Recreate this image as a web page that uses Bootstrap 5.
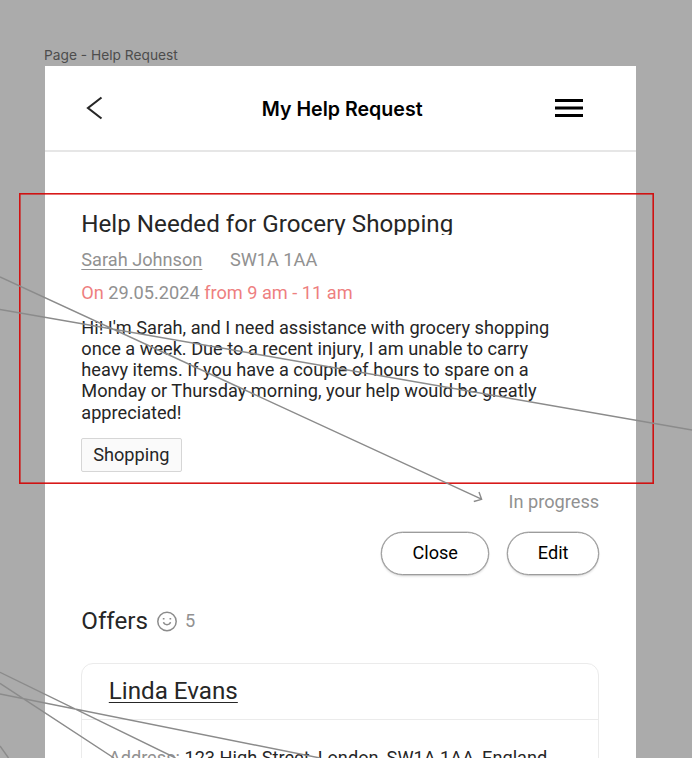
<!DOCTYPE html>
<html lang="en">
<head>
<meta charset="utf-8">
<meta name="viewport" content="width=device-width, initial-scale=1">
<title>My Help Request</title>
<link href="https://cdn.jsdelivr.net/npm/bootstrap@5.3.0/dist/css/bootstrap.min.css" rel="stylesheet">
<style>
body{background:#ababab;height:758px;font-family:Roboto,sans-serif;font-size:18.18px;line-height:22px;color:#262626}
.artboard{width:591px;height:692px;margin-left:44.7px}
.frame-label{font:13.75px/20px Inter,sans-serif;color:#4d4d4d;padding-top:45px;height:66px;margin-left:44px}
.topbar{height:86px;border-bottom:2px solid #e6e6e6;padding:0 53px 0 41px}
.topbar h1{font:600 19.6px/24px Inter,sans-serif;color:#000;padding-top:1px}
.content{padding:58px 36.5px 0 36.6px}
.heading{font-size:24.2px;line-height:28px}
.request-title{clip-path:inset(0 0 3px 0)}
.soft{color:#919191}
.coral{color:#ee7f7f}
.who{margin-top:11px;gap:27.5px}
.when{margin-top:11px}
.story{margin-top:13px;line-height:21.12px;height:106px}
.tag{margin-top:15px;width:101px;height:33.5px;padding-right:1px;border:1px solid #d6d6d6;background:#fafafa;border-radius:2px}
.status{margin-top:19.5px}
.actions{margin-top:19px;gap:18px}
.pill{height:42.5px;border:1px solid #9c9c9c;font-size:18.1px;line-height:22px;color:#000;background:#fff;box-shadow:0 0 0 .4px #b5b5b5,0 2px 2px rgba(0,0,0,.09)}
.pill-close{width:108px}
.pill-edit{width:92px}
.offers{margin-top:32px;gap:8px}
.offers svg{margin-right:-1px}
.offer-card{margin-top:28px;border:1px solid #ebebeb;border-radius:12px;height:160px}
.offer-card .card-header{height:56px;border-bottom:1px solid #ebebeb;padding:0 26.5px}
.offer-card .card-body{padding:27px 26.5px}
.under{text-decoration:underline;text-decoration-thickness:1.3px;text-underline-offset:2.5px}
</style>
</head>
<body class="position-relative overflow-hidden">
<div class="frame-label">Page - Help Request</div>
<main class="artboard bg-white overflow-hidden">
  <header class="topbar d-flex align-items-center justify-content-between">
    <svg width="44" height="26" viewBox="0 0 44 26" fill="none" stroke="#262626" stroke-width="2.1"><path d="M15.500 2.500 2 13l13.500 10.500"/></svg>
    <h1 class="mb-0">My Help Request</h1>
    <svg width="28" height="20" viewBox="0 0 28 20" fill="#000"><path d="M0 1h28v3H0zM0 8.500h28v3H0zM0 16h28v3H0z"/></svg>
  </header>
  <div class="content">
    <h2 class="heading request-title m-0 fw-normal">Help Needed for Grocery Shopping</h2>
    <div class="who soft d-flex"><span class="under">Sarah Johnson</span><span>SW1A 1AA</span></div>
    <div class="when coral">On <span class="soft">29.05.2024</span> from 9 am - 11 am</div>
    <p class="story mb-0 text-nowrap">Hi! I'm Sarah, and I need assistance with grocery shopping<br>once a week. Due to a recent injury, I am unable to carry<br>heavy items. If you have a couple of hours to spare on a<br>Monday or Thursday morning, your help would be greatly<br>appreciated!</p>
    <div class="tag d-flex align-items-center justify-content-center">Shopping</div>
    <div class="status soft text-end">In progress</div>
    <div class="actions d-flex justify-content-end">
      <button class="btn pill pill-close rounded-pill p-0">Close</button>
      <button class="btn pill pill-edit rounded-pill p-0">Edit</button>
    </div>
    <div class="offers d-flex align-items-center">
      <h2 class="heading m-0 fw-normal">Offers</h2>
      <svg width="22" height="22" viewBox="0 0 22 22" fill="none" stroke="#8c8c8c" stroke-width="1.5"><circle cx="11" cy="11.500" r="9.200"/><path d="M7.500 12.200c.7 3.300 6.300 3.300 7 0"/><path d="M6.800 8.800h1.700M13.500 8.800h1.700"/></svg>
      <span class="soft">5</span>
    </div>
    <div class="card offer-card">
      <div class="card-header bg-transparent d-flex align-items-center heading"><span class="under">Linda Evans</span></div>
      <div class="card-body text-nowrap"><span class="soft">Address:</span> 123 High Street, London, SW1A 1AA, England</div>
    </div>
  </div>
</main>
<svg class="position-absolute top-0 start-0 pe-none" width="692" height="758" viewBox="0 0 692 758" fill="none">
  <rect x="19.800" y="193.800" width="633.400" height="289.400" stroke="#d40000" stroke-opacity=".9" stroke-width="1.6"/>
  <g stroke="#8b8b8b" stroke-width="1.4">
    <path d="M0 277 481.500 499.200M479 492l2.600 7.300-7.800 2.200M0 309.500 692 430"/>
    <path d="M0 672.300 175.500 758M0 683.300 114 758M0 694 320 758M0 746l8.500 12"/>
  </g>
</svg>
<script src="https://cdn.jsdelivr.net/npm/bootstrap@5.3.0/dist/js/bootstrap.bundle.min.js"></script>
</body>
</html>
